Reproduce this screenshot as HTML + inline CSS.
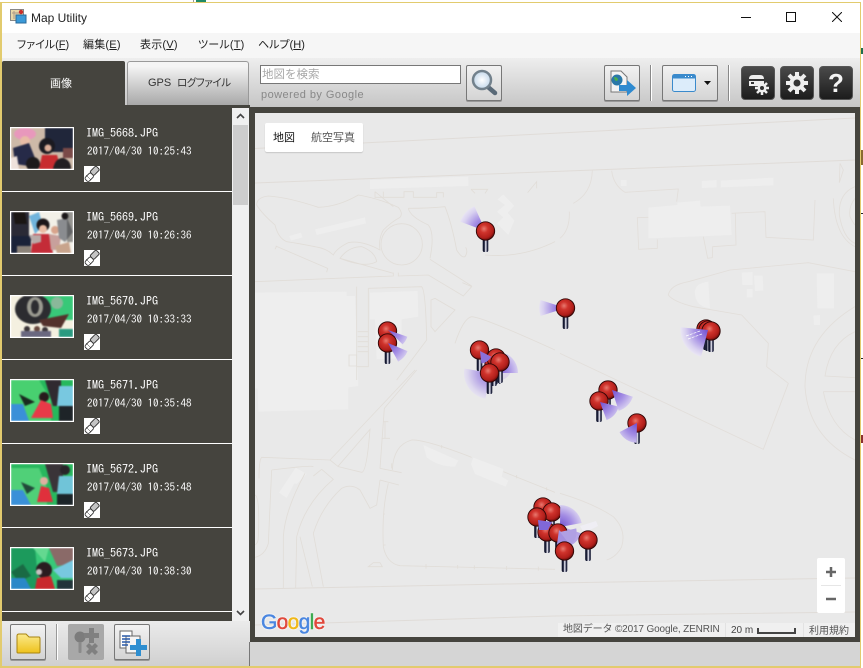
<!DOCTYPE html>
<html><head><meta charset="utf-8"><title>Map Utility</title>
<style>
*{box-sizing:border-box}
html,body{margin:0;padding:0;width:863px;height:668px;overflow:hidden;background:#fff}
body{position:relative;font-family:"Liberation Sans","IPAGothic",sans-serif}
.a{position:absolute}
.t{position:absolute;white-space:pre;line-height:14px}
.m{font-family:"Liberation Sans","Noto Sans CJK JP",sans-serif;font-size:11px;color:#222;top:38px;font-feature-settings:"palt";letter-spacing:.2px}
.f{font-family:"IPAGothic",monospace;color:#fff;font-size:12px}
.d{font-family:"IPAGothic",monospace;color:#fff;font-size:11px}
.btn{position:absolute;width:36px;height:36px;border:1px solid #777;border-radius:2px;background:linear-gradient(#f2f2f2,#d4d4d4);box-shadow:0 1px 0 #999}
.dk{position:absolute;width:34px;height:34px;top:66px;border-radius:4px;background:linear-gradient(#4a4a4a,#1c1c1c);border:1px solid #555}
.th{position:absolute;left:10px;width:64px;height:43px;border:1px solid #fff;background:#fff;overflow:hidden}
.th svg{display:block;filter:blur(.7px)}
.lk{position:absolute;left:84px;width:16px;height:16px;background:#fff}
.sep{position:absolute;left:2px;width:230px;height:1px;background:#fff}
u{text-decoration:underline}
svg{position:absolute;left:0;top:0}
</style></head><body>
<!-- outside desktop bits -->
<div class="a" style="left:196px;top:0;width:10px;height:2px;background:#1f8a66"></div>
<div class="a" style="left:193px;top:0;width:1px;height:2px;background:#999"></div>
<div class="a" style="left:861px;top:48px;width:2px;height:6px;background:#1f6e50"></div>
<div class="a" style="left:861px;top:150px;width:2px;height:15px;background:#8a6a30"></div>
<div class="a" style="left:861px;top:213px;width:2px;height:1px;background:#222"></div>
<div class="a" style="left:861px;top:358px;width:2px;height:1px;background:#222"></div>
<div class="a" style="left:861px;top:435px;width:2px;height:8px;background:#8a3030"></div>
<!-- window -->
<div class="a" style="left:0;top:2px;width:861px;height:666px;background:#fff;border:2px solid #e2cb6e;border-width:1px 1px 2px 2px;border-right-width:1px"></div>
<div class="a" style="left:2px;top:33px;width:858px;height:25px;background:#f6f6f6"></div>
<div class="a" style="left:2px;top:58px;width:858px;height:49px;background:linear-gradient(#eeeeee,#c6c6c6)"></div>
<div class="a" style="left:2px;top:621px;width:248px;height:45px;background:linear-gradient(#ebebeb,#d0d0d0)"></div>
<div class="a" style="left:250px;top:642px;width:610px;height:24px;background:#d5d5d5;border-left:0"></div>
<div class="a" style="left:249px;top:642px;width:1px;height:24px;background:#777"></div>
<!-- title -->
<svg class="a" style="left:10px;top:9px" width="17" height="16" viewBox="0 0 17 16"><rect x="0.5" y="0.5" width="13" height="11" fill="#e8d8a8" stroke="#888"/><path d="M2 4h9M4 2v8" stroke="#a98" /><rect x="6" y="6" width="10" height="8" fill="#3a9ad8" stroke="#2a6a9a"/><circle cx="11" cy="3" r="2.2" fill="#c8302c"/></svg>
<div class="t" style="left:31px;top:11px;font-size:12px;color:#222">Map Utility</div>
<div class="a" style="left:741px;top:17px;width:10px;height:1px;background:#111"></div>
<div class="a" style="left:786px;top:12px;width:10px;height:10px;border:1px solid #111"></div>
<svg class="a" style="left:832px;top:12px" width="10" height="10"><path d="M0 0L10 10M10 0L0 10" stroke="#111" stroke-width="1"/></svg>
<!-- menu -->
<div class="t m" style="left:17px;letter-spacing:0">ファイル(<u>F</u>)</div>
<div class="t m" style="left:83px">編集(<u>E</u>)</div>
<div class="t m" style="left:140px">表示(<u>V</u>)</div>
<div class="t m" style="left:198px">ツール(<u>T</u>)</div>
<div class="t m" style="left:258px;letter-spacing:0">ヘルプ(<u>H</u>)</div>
<!-- tabs -->
<div class="a" style="left:2px;top:61px;width:123px;height:47px;background:#45443e;border-radius:2px 2px 0 0"></div>
<div class="a" style="left:127px;top:61px;width:122px;height:44px;background:linear-gradient(#f4f4f4 10%,#a8a8a8);border:1px solid #999;border-bottom:0;border-radius:3px 3px 0 0"></div>
<div class="t" style="left:50px;top:76px;font-family:'Noto Sans CJK JP',sans-serif;font-size:11px;color:#fff">画像</div>
<div class="t" style="left:148px;top:76px;font-family:'Liberation Sans',sans-serif;font-size:11px;color:#333">GPS</div>
<div class="t" style="left:177px;top:76px;font-family:'Noto Sans CJK JP',sans-serif;font-size:10.500px;color:#333;font-feature-settings:'palt';letter-spacing:-.4px">ログファイル</div>
<!-- list -->
<div class="a" style="left:2px;top:105px;width:248px;height:516px;background:#45443e"></div>
<div class="a" style="left:232px;top:108px;width:17px;height:513px;background:#f0f0f0"></div>
<div class="a" style="left:233px;top:125px;width:15px;height:80px;background:#cdcdcd"></div>
<svg class="a" style="left:236px;top:113px" width="9" height="6"><path d="M1 5L4.500 1.500L8 5" fill="none" stroke="#444" stroke-width="1.600"/></svg>
<svg class="a" style="left:236px;top:610px" width="9" height="6"><path d="M1 1L4.500 4.500L8 1" fill="none" stroke="#444" stroke-width="1.600"/></svg>
<div class="sep" style="top:191px"></div><div class="sep" style="top:275px"></div><div class="sep" style="top:359px"></div><div class="sep" style="top:443px"></div><div class="sep" style="top:527px"></div><div class="sep" style="top:611px"></div>

<div class="th" style="top:127px"><svg width="62" height="41"><rect width="62" height="41" fill="#cdb9a8"/><rect x="34" width="28" height="24" fill="#20263a"/><rect x="52" y="20" width="10" height="10" fill="#7a4a48"/><ellipse cx="14" cy="6" rx="11" ry="6" fill="#e898bc"/><circle cx="14" cy="13" r="5" fill="#e8bca6"/><path d="M2 20L18 15L24 30L18 38L4 36Z" fill="#262a48"/><circle cx="36" cy="18" r="8" fill="#1b1a20"/><circle cx="37" cy="20" r="3.500" fill="#dcae98"/><path d="M31 27H46L50 41H28Z" fill="#c82c30"/><circle cx="22" cy="36" r="7" fill="#1c1a1c"/><path d="M42 41Q44 30 52 30Q60 32 60 41Z" fill="#221e22"/><path d="M0 30L6 28L8 41H0Z" fill="#efe2dc"/></svg></div>
<div class="th" style="top:211px"><svg width="62" height="41"><rect width="62" height="41" fill="#f2f0e8"/><rect x="0" y="0" width="18" height="41" fill="#2a2a36"/><path d="M2 0H14L16 12H4Z" fill="#1a1614"/><path d="M0 24H20V41H0Z" fill="#1a2238"/><rect x="6" y="34" width="14" height="7" fill="#8a8278"/><path d="M18 4L28 0L32 14L24 22Z" fill="#70b4dc"/><circle cx="32" cy="13" r="6.500" fill="#1c1618"/><circle cx="32" cy="17" r="4" fill="#eabca4"/><path d="M22 22L38 22L42 41H20Z" fill="#c42c38"/><path d="M18 23H30V30L22 32Z" fill="#b8aaa8"/><path d="M38 22L50 24L48 38H40Z" fill="#c8a09c"/><circle cx="44" cy="18" r="4" fill="#d8a48c"/><path d="M46 8L56 6L62 20L54 30L48 26Z" fill="#8a8c90"/><circle cx="54" cy="4" r="3.500" fill="#1a1618"/><path d="M44 34L58 30L60 41H46Z" fill="#c8a48c"/><rect x="56" y="0" width="6" height="30" fill="#3a3a3a" opacity=".5"/></svg></div>
<div class="th" style="top:295px"><svg width="62" height="41"><rect width="62" height="41" fill="#f4f0e0"/><rect x="28" width="34" height="24" fill="#38c878"/><ellipse cx="22" cy="13" rx="18" ry="15" fill="#2c2c30"/><ellipse cx="24" cy="11" rx="8" ry="10" fill="#9a9a90"/><ellipse cx="24" cy="11" rx="4" ry="7" fill="#2c2c30"/><path d="M28 24L58 18L50 32L32 30Z" fill="#54322c"/><circle cx="46" cy="7" r="6" fill="#8ab89a"/><circle cx="16" cy="33" r="3" fill="#3a3438"/><circle cx="26" cy="33" r="3" fill="#6a4a40"/><circle cx="34" cy="34" r="3" fill="#3a3438"/><rect x="10" y="35" width="30" height="6" fill="#6a6880"/><rect x="48" y="33" width="14" height="8" fill="#2a9a80"/></svg></div>
<div class="th" style="top:379px"><svg width="62" height="41"><rect width="62" height="41" fill="#26b85c"/><path d="M0 0H28L40 20V41H0Z" fill="#48d070"/><path d="M8 14L24 22L14 26Z" fill="#1a2a20"/><path d="M34 0H50V26H42Z" fill="#302a30"/><path d="M48 6H62V26H46Z" fill="#78c8e0"/><rect x="48" y="26" width="14" height="15" fill="#1e2428"/><circle cx="33" cy="17" r="5" fill="#281a1c"/><path d="M30 20L40 24L42 38H20Z" fill="#e83a48"/><path d="M0 24H12L18 41H0Z" fill="#3a90d8"/></svg></div>
<div class="th" style="top:463px"><svg width="62" height="41"><rect width="62" height="41" fill="#28b85e"/><path d="M0 4H28L36 24V41H0Z" fill="#50d078"/><path d="M10 18L24 24L16 30Z" fill="#22483a"/><path d="M34 0H52V28H42Z" fill="#3a3438"/><circle cx="54" cy="6" r="5" fill="#282428"/><path d="M48 12H62V30H46Z" fill="#70c4d8"/><rect x="46" y="30" width="16" height="11" fill="#1c2428"/><circle cx="33" cy="17" r="4" fill="#e0b0a0"/><path d="M30 22L38 24L42 38H26Z" fill="#e0303c"/><path d="M0 26H12L20 41H0Z" fill="#3a90d8"/></svg></div>
<div class="th" style="top:547px"><svg width="62" height="41"><rect width="62" height="41" fill="#38c878"/><path d="M0 0H24L28 41H0Z" fill="#1c9a5c"/><path d="M22 0H38L34 14Z" fill="#64d890"/><path d="M38 0H62V16L46 18Z" fill="#8a6a68"/><path d="M0 24L12 16L20 28L8 34Z" fill="#1a6a44"/><circle cx="33" cy="22" r="8" fill="#2a1c20"/><circle cx="28" cy="24" r="3" fill="#c8c0c0"/><path d="M26 30L40 28L44 41H24Z" fill="#c8282c"/><path d="M42 22L62 12V30L50 30Z" fill="#78c8e0"/><path d="M0 30H14L20 41H0Z" fill="#2a88c8"/><rect x="46" y="32" width="16" height="9" fill="#22343a"/></svg></div>

<div class="t f" style="left:86px;top:126px">IMG_5668.JPG</div><div class="t d" style="left:87px;top:145px">2017/04/30 10:25:43</div>
<div class="t f" style="left:86px;top:210px">IMG_5669.JPG</div><div class="t d" style="left:87px;top:229px">2017/04/30 10:26:36</div>
<div class="t f" style="left:86px;top:294px">IMG_5670.JPG</div><div class="t d" style="left:87px;top:313px">2017/04/30 10:33:33</div>
<div class="t f" style="left:86px;top:378px">IMG_5671.JPG</div><div class="t d" style="left:87px;top:397px">2017/04/30 10:35:48</div>
<div class="t f" style="left:86px;top:462px">IMG_5672.JPG</div><div class="t d" style="left:87px;top:481px">2017/04/30 10:35:48</div>
<div class="t f" style="left:86px;top:546px">IMG_5673.JPG</div><div class="t d" style="left:87px;top:565px">2017/04/30 10:38:30</div>

<svg width="0" height="0" style="position:absolute"><defs><g id="lnk" fill="none" stroke="#333" stroke-width=".9"><rect x="1" y="8.500" width="8.500" height="5.500" rx="2" fill="#fff" transform="rotate(-45 5.250 11.250)"/><rect x="6.500" y="2" width="8.500" height="5.500" rx="1.500" fill="#c4c4c4" transform="rotate(-45 10.750 4.750)"/><path d="M2 9L7 14" stroke-width=".5"/></g></defs></svg>
<div class="lk" style="top:166px"><svg width="16" height="16"><use href="#lnk"/></svg></div>
<div class="lk" style="top:250px"><svg width="16" height="16"><use href="#lnk"/></svg></div>
<div class="lk" style="top:334px"><svg width="16" height="16"><use href="#lnk"/></svg></div>
<div class="lk" style="top:418px"><svg width="16" height="16"><use href="#lnk"/></svg></div>
<div class="lk" style="top:502px"><svg width="16" height="16"><use href="#lnk"/></svg></div>
<div class="lk" style="top:586px"><svg width="16" height="16"><use href="#lnk"/></svg></div>

<!-- bottom left toolbar -->
<div class="btn" style="left:10px;top:624px"><svg width="34" height="34"><path d="M6 27V11Q6 9 8 9H15L18 12H28Q29 12 29 14V27Q29 28 28 28H7Q6 28 6 27Z" fill="url(#fold)" stroke="#a88410"/><defs><linearGradient id="fold" x1="0" y1="0" x2="0" y2="1"><stop offset="0" stop-color="#fbe98c"/><stop offset="1" stop-color="#eec21c"/></linearGradient></defs></svg></div>
<div class="a" style="left:56px;top:624px;width:2px;height:36px;background:#fff;border-left:1px solid #999"></div>
<div class="a" style="left:68px;top:624px;width:36px;height:36px;background:#a8a8a8;border-radius:2px"><svg width="36" height="36"><circle cx="12" cy="13" r="5.500" fill="#7c7c7c"/><rect x="10.500" y="18" width="3" height="11" rx="1" fill="#8a8a8a"/><path d="M21 4h5v5h5v5h-5v5h-5v-5h-5V9h5Z" fill="#808080"/><path d="M19 19L22 16L25 19L28 16L31 19L28 22L31 25L28 28L25 25L22 28L19 25L22 22Z" fill="#808080" transform="translate(-1,3)"/></svg></div>
<div class="btn" style="left:114px;top:624px"><svg width="34" height="34"><rect x="5" y="6" width="12" height="17" fill="#fff" stroke="#666"/><rect x="11" y="11" width="14" height="17" fill="#f4f4f4" stroke="#666"/><path d="M7 11h8M7 14h8M7 17h8M7 20h6" stroke="#2a5aa8" stroke-width="1.500"/><path d="M20 15h5v6h6v5h-6v6h-5v-6h-6v-5h6Z" fill="#2e8ed0" transform="translate(1,-1)"/></svg></div>

<!-- search -->
<div class="a" style="left:260px;top:65px;width:201px;height:19px;background:#fff;border:1px solid #777"></div>
<div class="t" style="left:262px;top:67px;font-family:'Noto Sans CJK JP',sans-serif;font-size:11.500px;color:#a8a8a8">地図を検索</div>
<div class="t" style="left:261px;top:88px;font-family:'Liberation Sans',sans-serif;font-size:11px;color:#888;letter-spacing:.45px">powered by Google</div>
<div class="btn" style="left:466px;top:65px"><svg width="34" height="34"><path d="M21 21L28 27" stroke="#5a6a78" stroke-width="4.500" stroke-linecap="round"/><circle cx="15" cy="14" r="9" fill="url(#lens)" stroke="#72818c" stroke-width="2.500"/><defs><radialGradient id="lens"><stop offset="0" stop-color="#fff"/><stop offset="1" stop-color="#c4d8ea"/></radialGradient></defs></svg></div>

<!-- toolbar right -->
<div class="btn" style="left:604px;top:65px"><svg width="34" height="34"><path d="M6 5H16L22 11V26H6Z" fill="#f4f4f4" stroke="#777"/><circle cx="12" cy="14" r="5.500" fill="#2a78a8"/><path d="M9 11Q13 11 13 14Q10 17 9 11Z" fill="#4ab04a"/><path d="M14 19H22V14L31 22L22 30V25H14Z" fill="#2e8ad0"/></svg></div>
<div class="a" style="left:650px;top:65px;width:2px;height:36px;background:#fff;border-left:1px solid #888"></div>
<div class="btn" style="left:662px;top:65px;width:56px"><svg width="54" height="34"><rect x="9.500" y="8.500" width="23" height="17" rx="2" fill="#dcecfa" stroke="#3a8acc"/><rect x="9.500" y="8.500" width="23" height="4" rx="1" fill="#3a8acc"/><path d="M25 10.500h1M28 10.500h1M22 10.500h1" stroke="#fff"/><path d="M41 15h7l-3.500 4Z" fill="#111"/></svg></div>
<div class="a" style="left:728px;top:65px;width:2px;height:36px;background:#fff;border-left:1px solid #888"></div>
<div class="dk" style="left:741px"><svg width="32" height="32"><path d="M7 12Q7 8 11 8H18Q22 8 22 12V19H7Z" fill="#eee"/><rect x="7" y="12" width="15" height="2" fill="#333"/><rect x="9" y="15" width="3" height="2" fill="#333"/><g transform="translate(20,21)"><path d="M0 -7V7M-7 0H7M-5 -5L5 5M5 -5L-5 5" stroke="#eee" stroke-width="2.500"/><circle r="4.500" fill="#eee"/><circle r="2" fill="#333"/></g></svg></div>
<div class="dk" style="left:780px"><svg width="32" height="32"><g transform="translate(16,16)"><path d="M0 -11V11M-11 0H11M-8 -8L8 8M8 -8L-8 8" stroke="#eee" stroke-width="4"/><circle r="7.500" fill="#eee"/><circle r="3.500" fill="#333"/></g></svg></div>
<div class="dk" style="left:819px"><div class="t" style="left:0;width:32px;text-align:center;top:9px;font-size:26px;font-weight:bold;color:#f4f4f4">?</div></div>

<!-- map frame -->
<div class="a" style="left:250px;top:107px;width:610px;height:535px;background:#45443e"></div>
<div class="a" style="left:255px;top:113px;width:600px;height:524px;background:#e9e9e9;overflow:hidden">
<svg width="600" height="524" viewBox="255 113 600 524" style="left:0;top:0">
<defs>
<radialGradient id="cg" gradientUnits="userSpaceOnUse" cx="0" cy="0" r="28"><stop offset="0" stop-color="#7050d0"/><stop offset=".45" stop-color="#a48ee4"/><stop offset=".8" stop-color="#d8d0f0"/><stop offset="1" stop-color="#ebe8f4"/></radialGradient>
<radialGradient id="hd" cx=".42" cy=".38" r=".62"><stop offset="0" stop-color="#e87a70"/><stop offset=".35" stop-color="#cf332c"/><stop offset=".8" stop-color="#b01e1a"/><stop offset="1" stop-color="#6a0e0c"/></radialGradient>
<linearGradient id="st" x1="0" x2="1" y1="0" y2="0"><stop offset="0" stop-color="#0c1028"/><stop offset=".3" stop-color="#1c2038"/><stop offset=".55" stop-color="#f4f4ff"/><stop offset=".8" stop-color="#2a2e4a"/><stop offset="1" stop-color="#0c1028"/></linearGradient>
<g id="p"><rect x="-2.800" y="8" width="5.600" height="13" rx="1.800" fill="url(#st)"/><circle r="9.200" fill="url(#hd)" stroke="#300606" stroke-width=".9"/></g>
</defs>
<!-- zoom 9 -->
<g transform="translate(255,110) scale(.33333)">
<g fill="#eeeeee" stroke="none">
<path d="M345 210L640 200L640 228L345 237Z"/>
<path d="M180 358L330 322L333 340L185 375Z"/><path d="M103 378L138 368L142 382L108 392Z"/>
<path d="M745 253L778 288L758 308L778 332L760 375L726 340L745 322L726 305L750 285L728 268Z"/>
<path d="M0 548L275 545L275 558L300 558L310 828L280 832L280 898L10 905L8 835L0 835Z"/>
<path d="M345 548L488 543L490 620L440 628L440 745L365 748L360 628L345 628Z"/>
</g>
<g fill="none" stroke="#e1ddd8" stroke-width="2.500">
<path d="M5 285Q5 262 40 258Q100 262 190 292Q250 290 310 255Q370 265 430 292Q445 310 435 322Q410 335 385 360Q370 385 375 420Q320 390 280 398Q245 415 235 435Q215 415 180 410Q130 400 95 395Q70 385 60 345Q20 310 5 285Z"/>
<path d="M255 445Q280 410 320 410Q360 425 365 455Q330 475 255 445Z"/>
<circle cx="440" cy="403" r="62"/>
<path d="M62 408L218 475L215 487M65 408L60 418"/>
<path d="M255 445L415 490M0 515L415 498V488M430 488V498L520 495L625 558L650 530L622 518M525 448L650 528"/>
<path d="M460 295Q465 320 520 345Q540 370 525 445M460 295Q520 295 570 290Q590 340 605 420Q620 445 630 440Q640 425 632 412"/>
<path d="M360 245V262H385V245M385 262H447V245H475V262H545V248H565V262"/>
<path d="M305 530V810M340 535V770H305M340 535L500 530Q512 540 515 690L425 810M528 570L540 565L600 600L540 665L528 650Z"/>
<path d="M648 238H698L690 250M660 250L648 238M818 248L845 215V235"/>
<path d="M690 435Q800 445 900 395"/>
<path d="M308 665H340M308 680H340M308 695H340M308 710H340M308 725H340"/>
<path d="M282 735H305V768H282Z"/>
<path d="M600 700Q625 625 650 620Q680 620 900 720"/>
<path d="M360 245L415 290"/>
</g></g>
<!-- long roads -->
<g fill="none" stroke="#e0dcd8" stroke-width="1">
<path d="M255 148.500L855 118M255 183L855 160M255 589L555 583L855 578M255 625L555 616L855 612"/>
</g>
<!-- zoom 10 -->
<g transform="translate(255,370) scale(.33333)">
<g fill="#eeeeee"><path d="M505 225L610 272L600 290Q550 290 515 262Z"/><path d="M655 263L745 297L740 320L760 332L752 350L660 312L648 282Z"/><path d="M122 293L155 312L125 342L118 340L95 384L72 368Z"/></g>
<g fill="none" stroke="#e1ddd8" stroke-width="2.500">
<path d="M225 270L480 0M388 115L485 0M388 115L375 295L440 308M225 270L20 262Q12 270 12 325M225 270L250 290L320 307Q335 307 345 178L248 290"/>
<path d="M375 330L432 345M375 330L365 405L345 415L315 360Q290 340 260 355Q200 410 175 490L205 650"/>
<path d="M400 340Q380 420 385 530Q395 580 435 587L900 598"/>
<path d="M412 300Q415 225 470 210Q510 208 650 262M745 305L900 367"/>
<path d="M200 298L235 328Q150 400 125 500L122 655M175 318L200 298M50 300Q170 285 175 290M50 300L40 520Q30 555 0 562M150 310Q90 420 85 500L85 655M135 500L172 650"/>
<path d="M0 375Q15 380 10 500Q10 520 0 525"/>
<path d="M340 590L355 578H375L382 590ZM385 155H400M390 155V205M380 205H405"/>
<path d="M410 280V295M385 432H390M385 525H392M513 582V596M608 585V596M658 586V598M755 588V600M850 590V602M560 225V235M785 315V325M875 352V362"/>
</g></g>
<!-- zoom 11 -->
<g transform="translate(560,110) scale(.33333)">
<g fill="#eeeeee"><path d="M265 293L352 285V278L420 272L422 290L510 287L515 375L265 385Z"/><path d="M425 213L470 210V232L425 234Z"/><path d="M482 212L640 203V226L482 232Z"/><path d="M182 210H200V228H182Z"/><path d="M445 515Q400 520 405 555Q410 590 450 595Z"/><path d="M545 488L578 486V525L547 525Z"/><path d="M582 497L608 497L610 542L585 543Z"/><path d="M560 537H578V562H560Z"/><path d="M770 490H822V595H772Z"/><path d="M760 617L780 615V645L762 645Z"/></g>
<g fill="none" stroke="#e2deda" stroke-width="2.500">
<path d="M265 322L232 323L236 418L292 415V388M515 310L615 305L618 382L760 390L765 270M430 380L443 445L457 443L458 410L528 405L526 310"/>
<path d="M155 182Q160 225 195 247L355 237L350 275M97 182Q95 250 40 280M28 305Q30 360 0 385"/>
<path d="M0 730L610 1018L685 820L620 770L625 700L545 615L400 590Q340 575 325 555Q330 525 385 515L510 480L745 458L885 485"/>
<path d="M885 590Q735 680 735 830Q745 980 885 1050M885 665Q810 700 795 798L885 803M790 845Q810 950 885 990M885 845H790M820 265Q825 380 885 410M885 230Q835 250 838 315Q850 385 885 400M885 265Q865 290 870 320Q880 340 885 345M840 160L850 180L838 218Z"/>
<path d="M0 1150Q100 1180 160 1220Q200 1260 185 1310Q170 1340 140 1350"/>
</g></g>

<!-- pins and cones -->
<path transform="translate(485.500,231) rotate(-137)" d="M0 0L25 -10.500A27 27 0 0 1 25 10.500Z" fill="url(#cg)"/>
<use href="#p" x="485.500" y="231"/>
<path transform="translate(565.500,308) rotate(180)" d="M0 0L25 -8A27 27 0 0 1 25 8Z" fill="url(#cg)"/>
<use href="#p" x="565.500" y="308"/>
<use href="#p" x="387.500" y="331"/>
<path transform="translate(388,330) rotate(32)" d="M0 0L20 -4.500A20 20 0 0 1 20 4.500Z" fill="url(#cg)"/>
<use href="#p" x="387.500" y="343"/>
<path transform="translate(388,343) rotate(42)" d="M0 0L20 -7A20 20 0 0 1 20 7Z" fill="url(#cg)"/>

<circle cx="497" cy="366" r="15" fill="#d8cfe8" opacity=".8"/>
<path transform="translate(490,373) rotate(145)" d="M0 0L18.400 -18.400A26 26 0 0 1 18.400 18.400Z" fill="url(#cg)" opacity=".75"/>
<path transform="translate(496,373) rotate(-30)" d="M0 0L19 -11A22 22 0 0 1 19 11Z" fill="url(#cg)"/>
<use href="#p" x="498" y="363"/><use href="#p" x="494" y="365"/>
<use href="#p" x="479.500" y="350"/>
<use href="#p" x="496" y="358"/>
<use href="#p" x="500" y="362"/>
<path transform="translate(480,351) rotate(55)" d="M0 0L11 -6A13 13 0 0 1 11 6Z" fill="#8a70d8"/>
<use href="#p" x="489.500" y="373"/>

<use href="#p" x="706" y="329"/><use href="#p" x="708" y="330"/><use href="#p" x="711" y="331"/>
<path transform="translate(708,330) rotate(145)" d="M0 0L21 -18A28 28 0 0 1 21 18Z" fill="url(#cg)"/>
<path d="M686 336L700 331M688 339L702 334" stroke="#fff" stroke-width=".7" stroke-dasharray="3 1"/>

<use href="#p" x="608" y="390"/>
<path transform="translate(612,390) rotate(45)" d="M0 0L19.500 -10A22 22 0 0 1 19.500 10Z" fill="url(#cg)"/>
<use href="#p" x="599" y="401"/>
<path transform="translate(600,402) rotate(42)" d="M0 0L17 -9A19 19 0 0 1 17 9Z" fill="url(#cg)"/>
<use href="#p" x="637" y="423"/>
<path transform="translate(637,423) rotate(122)" d="M0 0L17 -10A20 20 0 0 1 17 10Z" fill="url(#cg)"/>

<use href="#p" x="543" y="507"/><use href="#p" x="552" y="512"/><use href="#p" x="537" y="517"/>
<path transform="translate(560,527) rotate(-50)" d="M0 0L17 -14A22 22 0 0 1 17 14Z" fill="url(#cg)"/>
<path transform="translate(560,526) rotate(40)" d="M0 0L21 -8A24 24 0 0 1 21 8Z" fill="#b8a6e8"/>
<path d="M580 526L596 521L598 526L584 533Z" fill="#efeef4"/>
<use href="#p" x="547" y="532"/>
<path d="M538 520L552 522L548 530L539 530Z" fill="#8068d8"/>
<use href="#p" x="558" y="533"/>
<path transform="translate(559,530) rotate(70)" d="M0 0L15 -8A17 17 0 0 1 15 8Z" fill="#a490e0"/>
<path transform="translate(560,532) rotate(20)" d="M0 0L14 -9A17 17 0 0 1 14 9Z" fill="#b0a0e4"/>
<use href="#p" x="564.500" y="551"/>
<use href="#p" x="588" y="540"/>
</svg>
</div>

<!-- map controls -->
<div class="a" style="left:265px;top:123px;width:98px;height:29px;background:#fff;border-radius:2px;box-shadow:0 1px 1px rgba(0,0,0,.15)"></div>
<div class="t" style="left:273px;top:130px;font-family:'Noto Sans CJK JP',sans-serif;font-size:11px;color:#111">地図</div>
<div class="t" style="left:311px;top:130px;font-family:'Noto Sans CJK JP',sans-serif;font-size:11px;color:#555">航空写真</div>
<div class="a" style="left:817px;top:558px;width:28px;height:55px;background:#fff;border-radius:2px"></div>
<div class="a" style="left:821px;top:585px;width:20px;height:1px;background:#e6e6e6"></div>
<svg class="a" style="left:817px;top:558px" width="28" height="55"><path d="M9 14H19M14 9V19" stroke="#666" stroke-width="2.500"/><path d="M9 41H19" stroke="#666" stroke-width="2.500"/></svg>
<div class="t" style="left:261px;top:610px;font-size:21px;line-height:26px;letter-spacing:-.7px;-webkit-text-stroke:.5px;text-shadow:0 0 2px #fff,0 0 2px #fff"><span style="color:#4a86e0">G</span><span style="color:#e0483c">o</span><span style="color:#f0b818">o</span><span style="color:#4a86e0">g</span><span style="color:#3aa84e">l</span><span style="color:#e0483c">e</span></div>
<div class="a" style="left:558px;top:623px;width:297px;height:14px;background:#f0f0f0"></div>
<div class="a" style="left:725px;top:623px;width:1px;height:14px;background:#e2e2e2"></div>
<div class="a" style="left:803px;top:623px;width:1px;height:14px;background:#e2e2e2"></div>
<div class="t" style="left:563px;top:623px;font-family:'Liberation Sans','Noto Sans CJK JP',sans-serif;font-size:10px;color:#555;letter-spacing:-.14px">地図データ ©2017 Google, ZENRIN</div>
<div class="t" style="left:731px;top:624px;font-size:10px;color:#444">20 m</div>
<div class="a" style="left:757px;top:628px;width:39px;height:6px;border:1px solid #444;border-top:0;border-width:0 2px 2px 2px"></div>
<div class="t" style="left:809px;top:623px;font-family:'Noto Sans CJK JP',sans-serif;font-size:10px;color:#555">利用規約</div>
</body></html>
